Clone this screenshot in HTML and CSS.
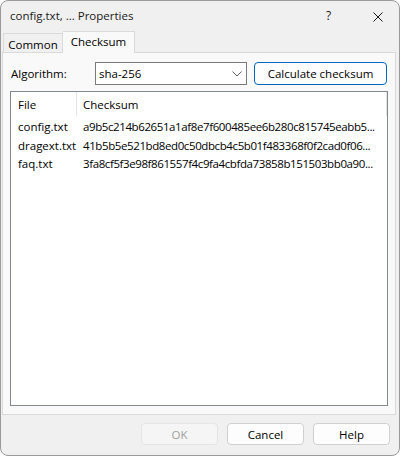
FILE: index.html
```html
<!DOCTYPE html>
<html>
<head>
<meta charset="utf-8">
<link rel="stylesheet" href="styles.css">
</head>
<body>
<div class="window">
  <div class="titlebar">
    <span class="title">config.txt, ... Properties</span>
    <span class="help">?</span>
    <span class="close"><svg width="10" height="10" viewBox="0 0 10 10"><path d="M0.5 0.5 L9.5 9.5 M9.5 0.5 L0.5 9.5" stroke="#1a1a1a" stroke-width="1" fill="none"/></svg></span>
  </div>
  <div class="tabs">
    <div class="tab">Common</div>
    <div class="tab active">Checksum</div>
  </div>
  <div class="panel">
    <div class="algo-row">
      <span class="algo-label">Algorithm:</span>
      <div class="combo">
        <span class="combo-value">sha-256</span>
        <svg class="chevron" width="10" height="6" viewBox="0 0 10 6"><path d="M0.5 0.5 L5 5 L9.5 0.5" stroke="#606060" stroke-width="1" fill="none"/></svg>
      </div>
      <button class="calc">Calculate checksum</button>
    </div>
    <div class="list">
      <div class="list-header">
        <div class="col-file">File</div>
        <div class="col-sum">Checksum</div>
      </div>
      <div class="list-row"><div class="col-file">config.txt</div><div class="col-sum">a9b5c214b62651a1af8e7f600485ee6b280c815745eabb5...</div></div>
      <div class="list-row"><div class="col-file">dragext.txt</div><div class="col-sum">41b5b5e521bd8ed0c50dbcb4c5b01f483368f0f2cad0f06...</div></div>
      <div class="list-row"><div class="col-file">faq.txt</div><div class="col-sum">3fa8cf5f3e98f861557f4c9fa4cbfda73858b151503bb0a90...</div></div>
    </div>
  </div>
  <div class="footer">
    <button class="btn disabled">OK</button>
    <button class="btn">Cancel</button>
    <button class="btn">Help</button>
  </div>
</div>
</body>
</html>
```

FILE: styles.css
```css
* { box-sizing: border-box; }
html, body { margin: 0; padding: 0; background: #ffffff; }
body {
  font-family: "Open Sans", "Noto Sans", sans-serif;
  font-size: 11.5px;
  color: #000;
}
.window {
  width: 400px;
  height: 456px;
  border: 1px solid #9a9a9a;
  border-radius: 8px;
  background: #f0f0f0;
  display: flex;
  flex-direction: column;
  overflow: hidden;
}
.titlebar {
  height: 30px;
  display: flex;
  align-items: center;
  line-height: 30px;
  flex: none;
}
.title { padding-left: 9px; flex: 1; color: #1a1a1a; }
.help { width: 14px; margin-right: 33px; color: #1a1a1a; font-size: 12px; }
.close { width: 26px; display: flex; align-items: center; height: 30px; margin-top: 1px; }
.tabs {
  height: 21px;
  display: flex;
  align-items: flex-end;
  padding-left: 2px;
  flex: none;
  position: relative;
  z-index: 1;
}
.tab {
  height: 19px;
  width: 60px;
  border: 1px solid #dadada;
  border-bottom: none;
  background: #f0f0f0;
  text-align: center;
  line-height: 19px;
  padding-top: 1px;
}
.tab.active {
  height: 22px;
  width: 72px;
  margin-bottom: -1px;
  background: #f9f9f9;
  border-left: none;
  line-height: 20px;
  padding-top: 0;
}
.panel {
  margin: 0 3px 0 1px;
  height: 363px;
  border: 1px solid #dadada;
  background: #f9f9f9;
  padding: 9px 7px 8px 7px;
  display: flex;
  flex-direction: column;
  flex: none;
}
.algo-row {
  display: flex;
  align-items: center;
  height: 23px;
}
.algo-label { width: 85px; padding-left: 1px; }
.combo {
  width: 152px;
  height: 23px;
  border: 1px solid #7a7a7a;
  background: #fff;
  display: flex;
  align-items: center;
  padding-left: 3px;
  padding-right: 4px;
}
.combo-value { flex: 1; }
.chevron { margin-top: 1px; }
.calc {
  margin-left: 7px;
  width: 133px;
  height: 23px;
  border: 1px solid #0067c0;
  border-radius: 4px;
  background: #fdfdfd;
  font: inherit;
  color: #000;
  padding: 0;
}
.list {
  margin-top: 6px;
  flex: 1;
  border: 1px solid #828790;
  background: #fff;
}
.list-header {
  height: 24px;
  display: flex;
  align-items: center;
}
.list-header .col-file { border-right: 1px solid #e5e5e5; height: 24px; line-height: 25px; }
.list-header .col-sum { border-right: 1px solid #e5e5e5; height: 24px; line-height: 25px; width: 310px; }
.col-file { width: 66px; padding-left: 7px; white-space: nowrap; }
.col-sum { padding-left: 6px; white-space: nowrap; overflow: hidden; }
.list-row {
  display: flex;
  height: 18.5px;
  line-height: 19px;
}
.list-header + .list-row { margin-top: 1px; }
.list-row .col-sum { width: 300px; letter-spacing: -0.4px; }
.footer {
  flex: 1;
  display: flex;
  justify-content: flex-end;
  align-items: flex-start;
  padding: 8px 9px 0 0;
  gap: 9px;
}
.btn {
  width: 77px;
  height: 22px;
  border: 1px solid #d0d0d0;
  border-radius: 4px;
  background: #fdfdfd;
  font: inherit;
  color: #000;
  padding: 0;
}
.btn.disabled {
  background: #f5f5f5;
  border-color: #e5e5e5;
  color: #a0a0a0;
}
```
